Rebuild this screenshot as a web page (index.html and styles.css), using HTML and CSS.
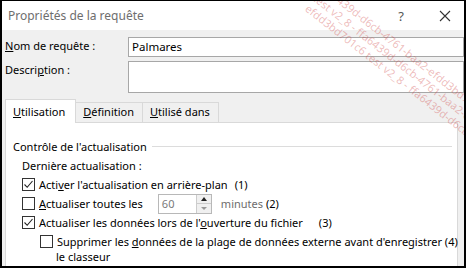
FILE: index.html
```html
<!DOCTYPE html>
<html lang="fr">
<head>
<meta charset="UTF-8">
<link rel="stylesheet" href="styles.css">
<title>Propriétés de la requête</title>
</head>
<body>
<div class="dialog">
  <div class="titlebar">
    <span class="title">Propriétés de la requête</span>
    <span class="help">?</span>
    <svg class="close" width="12" height="12" viewBox="0 0 12 12"><path d="M1 1 L11 11 M11 1 L1 11" stroke="#333" stroke-width="1.1" fill="none"/></svg>
  </div>

  <div class="content">
    <div class="field">
      <label><u>N</u>om de requête :</label>
      <div class="textbox">Palmares</div>
    </div>
    <div class="field">
      <label>Descri<u>p</u>tion :</label>
      <div class="textbox tall"></div>
    </div>

    <div class="tabs">
      <div class="tab active"><u>U</u>tilisation</div>
      <div class="tab"><u>D</u>éfinition</div>
      <div class="tab"><u>U</u>tilisé dans</div>
    </div>

    <div class="panel">
      <div class="group-title"><span>Contrôle de l'actualisation</span></div>
      <div class="subtitle">Dernière actualisation :</div>

      <div class="option">
        <span class="checkbox checked"><svg width="11" height="11" viewBox="0 0 11 11"><path d="M1.5 5.5 L4.2 8.3 L9.5 2" stroke="#222" stroke-width="1.1" fill="none"/></svg></span>
        <span>Acti<u>v</u>er l'actualisation en arrière-plan</span>
        <span class="num n1">(1)</span>
      </div>

      <div class="option">
        <span class="checkbox"></span>
        <span><u>A</u>ctualiser toutes les</span>
        <div class="spin">
          <span class="spin-value">60</span>
          <div class="spin-btns">
            <span class="arrow up"></span>
            <span class="arrow down"></span>
          </div>
        </div>
        <span class="disabled">minutes</span>
        <span class="num">(2)</span>
      </div>

      <div class="option">
        <span class="checkbox checked"><svg width="11" height="11" viewBox="0 0 11 11"><path d="M1.5 5.5 L4.2 8.3 L9.5 2" stroke="#222" stroke-width="1.1" fill="none"/></svg></span>
        <span>Actualiser les données lors de l'<u>o</u>uverture du fichier</span>
        <span class="num n3">(3)</span>
      </div>

      <div class="option sub">
        <span class="checkbox"></span>
        <span>Supprimer les <u>d</u>onnées de la plage de données externe avant d'enregistrer (4)</span>
      </div>
      <div class="continuation">le classeur</div>
    </div>
  </div>

  <div class="watermark">
    <span>ffa6439d-d6cb-4761-baa2-efdd3bd701c6 test v2_8</span>
    <span>test v2_8 - ffa6439d-d6cb-4761-baa2-efdd3bd701c6 te</span>
    <span>efdd3bd701c6 test v2_8 - ffa6439d-d6cb-4761-baa2</span>
  </div>
</div>
</body>
</html>
```

FILE: styles.css
```css
body {
  margin: 0;
  font-family: "Noto Sans", "Open Sans", sans-serif;
  font-size: 11px;
  color: #000;
  background: #000;
}

.dialog {
  position: relative;
  width: 462px;
  height: 265px;
  border-style: solid;
  border-color: #000;
  border-width: 1px 2px 2px 2px;
  background: #f0f0f0;
  overflow: hidden;
}

.titlebar {
  height: 29px;
  background: #fff;
  display: flex;
  align-items: center;
  padding-left: 6px;
}

.title {
  flex: 1;
  color: #6e6e6e;
  font-size: 12px;
}

.help {
  color: #555;
  font-size: 13px;
  margin-right: 35px;
}

.close {
  margin-right: 13px;
}

.content {
  padding: 7px 0 0 3px;
}

.field {
  display: flex;
  margin-bottom: 4px;
}

.field label {
  width: 123px;
  padding-top: 1px;
}

.textbox {
  width: 331px;
  height: 18px;
  border: 1px solid #a7a7a7;
  background: #fff;
  padding-left: 3px;
  line-height: 18px;
  font-size: 11.5px;
}

.textbox.tall {
  height: 30px;
}

.tabs {
  display: flex;
  align-items: flex-end;
  margin-top: 6px;
  height: 23px;
}

.tab {
  height: 19px;
  line-height: 18px;
  padding: 0 8px 0 7px;
  border: 1px solid #d9d9d9;
  border-bottom: none;
  border-left: none;
  background: #f0f0f0;
}

.tab.active {
  height: 23px;
  line-height: 24px;
  background: #fff;
  border-left: 1px solid #d9d9d9;
  padding: 0 10px 0 7px;
  position: relative;
  z-index: 1;
  margin-bottom: -1px;
}

.panel {
  width: 453px;
  height: 150px;
  background: #fff;
  border: 1px solid #d9d9d9;
  padding: 16px 0 0 7px;
  box-sizing: border-box;
}

.group-title {
  display: flex;
  align-items: center;
  gap: 5px;
  margin-right: 5px;
}

.group-title::after {
  content: "";
  flex: 1;
  border-top: 1px solid #dcdcdc;
}

.subtitle {
  margin: 4px 0 0 9px;
  height: 17px;
}

.option {
  display: flex;
  align-items: center;
  height: 19px;
  margin-left: 9px;
  white-space: nowrap;
}

.checkbox {
  width: 11px;
  height: 11px;
  border: 1px solid #333;
  background: #fff;
  margin-right: 4px;
  flex: none;
  display: flex;
}

.num.n1 {
  margin-left: 7px;
}

.num.n3 {
  margin-left: 16px;
}

.spin {
  display: flex;
  width: 52px;
  height: 18px;
  border: 1px solid #b8b8b8;
  margin: 0 9px 0 15px;
  background: #fff;
}

.spin-value {
  flex: 1;
  color: #7a7a7a;
  padding-left: 3px;
  line-height: 18px;
}

.spin-btns {
  width: 14px;
  display: flex;
  flex-direction: column;
  border-left: 1px solid #ccc;
  background: #f0f0f0;
}

.arrow {
  flex: 1;
  display: flex;
  align-items: center;
  justify-content: center;
}

.arrow.up {
  border-bottom: 1px solid #ccc;
}

.arrow.up::before {
  content: "";
  border-left: 3px solid transparent;
  border-right: 3px solid transparent;
  border-bottom: 4px solid #222;
}

.arrow.down::before {
  content: "";
  border-left: 3px solid transparent;
  border-right: 3px solid transparent;
  border-top: 3px solid #999;
}

.disabled {
  color: #6d6d6d;
  margin-right: 3px;
}

.option.sub {
  margin-left: 27px;
}

.continuation {
  margin-left: 43px;
  line-height: 12px;
}

.watermark {
  position: absolute;
  top: -20px;
  left: 325px;
  width: 260px;
  transform: rotate(38deg);
  transform-origin: 0 0;
  display: flex;
  flex-direction: column;
  color: rgba(205, 60, 60, 0.35);
  font-size: 11px;
  line-height: 13px;
  white-space: nowrap;
  pointer-events: none;
}
```
